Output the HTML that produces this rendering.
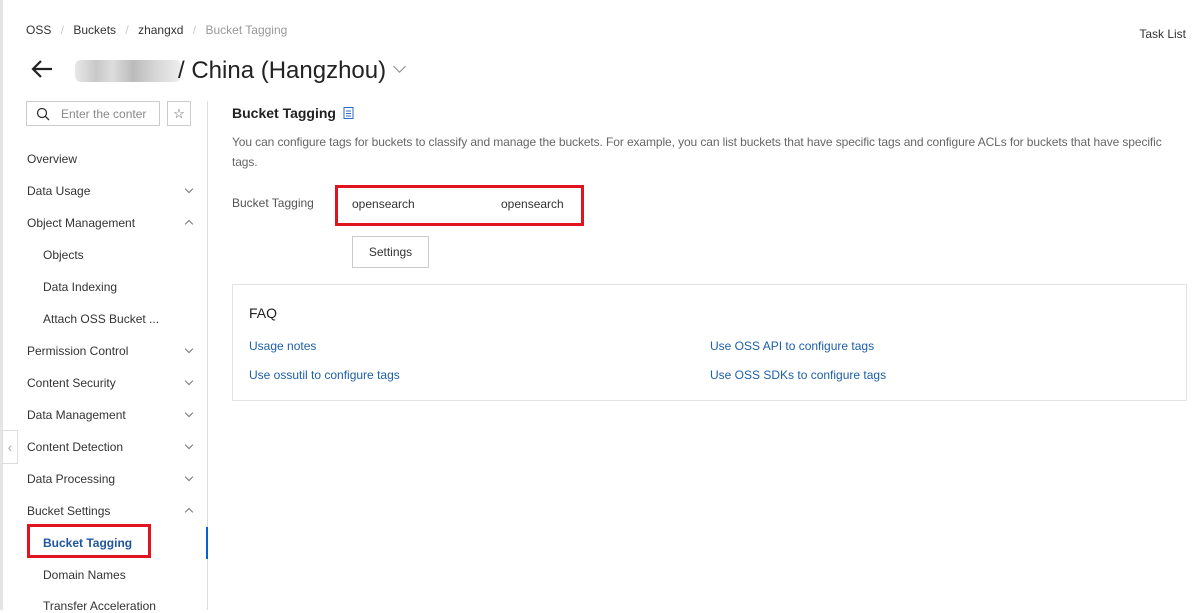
<!DOCTYPE html>
<html><head><meta charset="utf-8"><style>
*{margin:0;padding:0;box-sizing:border-box}
body{width:1198px;height:610px;overflow:hidden;background:#fff;font-family:"Liberation Sans",sans-serif;color:#333;font-size:12px;position:relative}
.a{position:absolute;white-space:nowrap}
.nav{position:absolute;left:27px;font-size:12px;color:#333}
.sub{left:43px}
.chev{position:absolute;left:186px;width:6px;height:6px;border-right:1px solid #777;border-bottom:1px solid #777;transform:rotate(45deg)}
.up{transform:rotate(-135deg)}
.link{position:absolute;color:#1d5fa8;font-size:12px}
</style></head><body>
<div class="a" style="left:0;top:0;width:3px;height:610px;background:#e5e5e5"></div>
<div class="a" style="left:26px;top:23px;color:#333">OSS <span style="color:#ccc;margin:0 6px">/</span> Buckets <span style="color:#ccc;margin:0 6px">/</span> zhangxd <span style="color:#ccc;margin:0 6px">/</span> <span style="color:#999">Bucket Tagging</span></div>
<div class="a" style="right:12px;top:27px;font-size:12px">Task List</div>
<svg class="a" style="left:30px;top:59px" width="24" height="20" viewBox="0 0 24 20"><path d="M22 10H3M11 2L3 10l8 8" stroke="#222" stroke-width="2.2" fill="none"/></svg>
<div class="a" style="left:75px;top:60px;width:106px;height:22px;background:linear-gradient(90deg,#e8e8e8,#c8c8c8 20%,#ddd 35%,#bbb 55%,#d5d5d5 75%,#eee);border-radius:6px"></div>
<div class="a" style="left:178px;top:57px;font-size:24px;color:#222">/ China (Hangzhou)</div>
<div class="a" style="left:395px;top:62px;width:9px;height:9px;border-right:1.5px solid #888;border-bottom:1.5px solid #888;transform:rotate(45deg)"></div>
<div class="a" style="left:26px;top:101px;width:134px;height:25px;border:1px solid #ccc"></div>
<svg class="a" style="left:36px;top:107px" width="14" height="14"><circle cx="6" cy="6" r="4.5" stroke="#333" stroke-width="1.3" fill="none"/><path d="M9.5 9.5L13 13" stroke="#333" stroke-width="1.3"/></svg>
<div class="a" style="left:61px;top:107px;color:#888">Enter the conter</div>
<div class="a" style="left:167px;top:101px;width:24px;height:25px;border:1px solid #ccc;text-align:center;line-height:23px;color:#555;font-size:13px">☆</div>
<div class="a" style="left:207px;top:101px;width:1px;height:509px;background:#ddd"></div>
<div class="a" style="left:206px;top:527px;width:2px;height:32px;background:#0064c8"></div>
<div class="nav" style="top:152px">Overview</div>
<div class="nav" style="top:184px">Data Usage</div><div class="chev" style="top:186px"></div>
<div class="nav" style="top:216px">Object Management</div><div class="chev up" style="top:221px"></div>
<div class="nav sub" style="top:248px">Objects</div>
<div class="nav sub" style="top:280px">Data Indexing</div>
<div class="nav sub" style="top:312px">Attach OSS Bucket ...</div>
<div class="nav" style="top:344px">Permission Control</div><div class="chev" style="top:346px"></div>
<div class="nav" style="top:376px">Content Security</div><div class="chev" style="top:378px"></div>
<div class="nav" style="top:408px">Data Management</div><div class="chev" style="top:410px"></div>
<div class="nav" style="top:440px">Content Detection</div><div class="chev" style="top:442px"></div>
<div class="nav" style="top:472px">Data Processing</div><div class="chev" style="top:474px"></div>
<div class="nav" style="top:504px">Bucket Settings</div><div class="chev up" style="top:509px"></div>
<div class="a" style="left:27px;top:524px;width:124px;height:34px;border:3px solid #e0141e"></div>
<div class="nav sub" style="top:536px;color:#1e56a0;font-weight:bold">Bucket Tagging</div>
<div class="nav sub" style="top:568px">Domain Names</div>
<div class="nav sub" style="top:599px">Transfer Acceleration</div>
<div class="a" style="left:2px;top:430px;width:16px;height:34px;border:1px solid #ddd;background:#fff;color:#aaa;text-align:center;line-height:32px;font-size:14px">‹</div>
<div class="a" style="left:232px;top:105px;font-size:14px;font-weight:bold;color:#222">Bucket Tagging</div>
<svg class="a" style="left:343px;top:106px" width="11" height="13"><rect x="1" y="1.5" width="9" height="11" fill="none" stroke="#2a6cc0"/><path d="M3 5h5M3 7.5h5M3 10h5" stroke="#2a6cc0"/></svg>
<div class="a" style="left:232px;top:132px;color:#666;line-height:20px;letter-spacing:-0.1px">You can configure tags for buckets to classify and manage the buckets. For example, you can list buckets that have specific tags and configure ACLs for buckets that have specific<br>tags.</div>
<div class="a" style="left:232px;top:196px;color:#555">Bucket Tagging</div>
<div class="a" style="left:335px;top:185px;width:249px;height:41px;border:3px solid #e0141e"></div>
<div class="a" style="left:352px;top:197px">opensearch</div>
<div class="a" style="left:501px;top:197px">opensearch</div>
<div class="a" style="left:352px;top:236px;width:77px;height:32px;border:1px solid #ccc;text-align:center;line-height:30px">Settings</div>
<div class="a" style="left:232px;top:284px;width:955px;height:117px;border:1px solid #e3e3e3"></div>
<div class="a" style="left:249px;top:305px;font-size:14px;color:#222">FAQ</div>
<div class="link" style="left:249px;top:339px">Usage notes</div>
<div class="link" style="left:249px;top:368px">Use ossutil to configure tags</div>
<div class="link" style="left:710px;top:339px">Use OSS API to configure tags</div>
<div class="link" style="left:710px;top:368px">Use OSS SDKs to configure tags</div>
</body></html>
